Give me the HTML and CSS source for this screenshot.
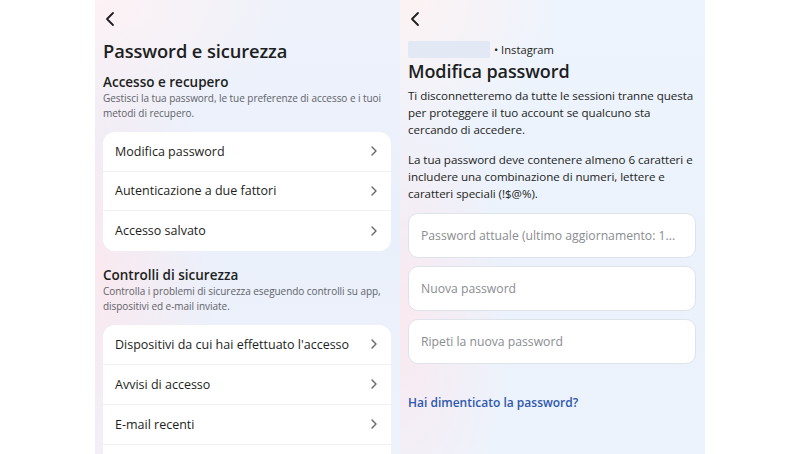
FILE: index.html
```html
<!DOCTYPE html>
<html lang="it">
<head>
<meta charset="utf-8">
<link rel="stylesheet" href="styles.css">
</head>
<body>
<div class="stage">
  <section class="panel panel-left">
    <div class="back">
      <svg width="12" height="16" viewBox="0 0 12 16"><path d="M9 2 L3 8 L9 14" fill="none" stroke="#1c1e21" stroke-width="1.8" stroke-linecap="round" stroke-linejoin="round"/></svg>
    </div>
    <h1 class="title">Password e sicurezza</h1>
    <h2 class="sec-title">Accesso e recupero</h2>
    <p class="sec-desc">Gestisci la tua password, le tue preferenze di accesso e i tuoi metodi di recupero.</p>
    <div class="card">
      <div class="row"><span>Modifica password</span><svg class="chev" width="8" height="12" viewBox="0 0 8 12"><path d="M2 2 L6 6 L2 10" fill="none" stroke="#65676b" stroke-width="1.4" stroke-linecap="round" stroke-linejoin="round"/></svg></div>
      <div class="row"><span>Autenticazione a due fattori</span><svg class="chev" width="8" height="12" viewBox="0 0 8 12"><path d="M2 2 L6 6 L2 10" fill="none" stroke="#65676b" stroke-width="1.4" stroke-linecap="round" stroke-linejoin="round"/></svg></div>
      <div class="row"><span>Accesso salvato</span><svg class="chev" width="8" height="12" viewBox="0 0 8 12"><path d="M2 2 L6 6 L2 10" fill="none" stroke="#65676b" stroke-width="1.4" stroke-linecap="round" stroke-linejoin="round"/></svg></div>
    </div>
    <h2 class="sec-title sec2">Controlli di sicurezza</h2>
    <p class="sec-desc">Controlla i problemi di sicurezza eseguendo controlli su app, dispositivi ed e-mail inviate.</p>
    <div class="card card2">
      <div class="row"><span>Dispositivi da cui hai effettuato l'accesso</span><svg class="chev" width="8" height="12" viewBox="0 0 8 12"><path d="M2 2 L6 6 L2 10" fill="none" stroke="#65676b" stroke-width="1.4" stroke-linecap="round" stroke-linejoin="round"/></svg></div>
      <div class="row"><span>Avvisi di accesso</span><svg class="chev" width="8" height="12" viewBox="0 0 8 12"><path d="M2 2 L6 6 L2 10" fill="none" stroke="#65676b" stroke-width="1.4" stroke-linecap="round" stroke-linejoin="round"/></svg></div>
      <div class="row"><span>E-mail recenti</span><svg class="chev" width="8" height="12" viewBox="0 0 8 12"><path d="M2 2 L6 6 L2 10" fill="none" stroke="#65676b" stroke-width="1.4" stroke-linecap="round" stroke-linejoin="round"/></svg></div>
      <div class="row"><span>&nbsp;</span></div>
    </div>
  </section>
  <section class="panel panel-right">
    <div class="back">
      <svg width="12" height="16" viewBox="0 0 12 16"><path d="M9 2 L3 8 L9 14" fill="none" stroke="#1c1e21" stroke-width="1.8" stroke-linecap="round" stroke-linejoin="round"/></svg>
    </div>
    <div class="account"><span class="blur"></span><span class="acc-name">• Instagram</span></div>
    <h1 class="title title-r">Modifica password</h1>
    <p class="para">Ti disconnetteremo da tutte le sessioni tranne questa per proteggere il tuo account se qualcuno sta<br>cercando di accedere.</p>
    <p class="para para2">La tua password deve contenere almeno 6 caratteri e includere una combinazione di numeri, lettere e caratteri speciali (!$@%).</p>
    <div class="fields">
      <div class="field">Password attuale (ultimo aggiornamento: 1...</div>
      <div class="field">Nuova password</div>
      <div class="field">Ripeti la nuova password</div>
    </div>
    <a class="link">Hai dimenticato la password?</a>
  </section>
</div>
</body>
</html>
```
FILE: styles.css
```css
* { box-sizing: border-box; }
html, body { margin: 0; padding: 0; background: #ffffff; }
body {
  width: 800px;
  height: 454px;
  overflow: hidden;
  font-family: "Open Sans", "Noto Sans", sans-serif;
  color: #1c1e21;
}
.stage {
  display: flex;
  justify-content: center;
  height: 454px;
}
.panel {
  width: 305px;
  height: 454px;
  overflow: hidden;
  padding: 0 9px 0 8px;
}
.panel-left {
  background:
    radial-gradient(ellipse 120px 260px at 0% 60%, rgba(252, 232, 238, 0.9), rgba(252, 232, 238, 0) 100%),
    radial-gradient(ellipse 200px 130px at 0% 0%, rgba(253, 242, 244, 1), rgba(253, 242, 244, 0) 100%),
    linear-gradient(180deg, #eef2fb 0%, #eaf0fb 50%, #eef2fb 100%);
}
.panel-right {
  background:
    radial-gradient(ellipse 110px 240px at 0% 70%, rgba(252, 232, 238, 0.9), rgba(252, 232, 238, 0) 100%),
    radial-gradient(ellipse 160px 140px at 0% 0%, rgba(253, 242, 242, 1), rgba(253, 242, 242, 0) 100%),
    linear-gradient(180deg, #eef4fd 0%, #ebf2fc 60%, #edf3fc 100%);
}
.back {
  height: 16px;
  margin-top: 11px;
  padding-left: 1px;
  display: flex;
  align-items: center;
}
.back svg { display: block; }
.title {
  margin: 12px 0 0;
  font-size: 18.3px;
  font-weight: 600;
  line-height: 24px;
  letter-spacing: -0.1px;
}
.sec-title {
  margin: 10px 0 0;
  font-size: 13.5px;
  font-weight: 600;
  line-height: 18px;
}
.sec2 { margin-top: 15px; }
.sec-desc {
  margin: 0;
  font-size: 10px;
  line-height: 15px;
  color: #5f6368;
  letter-spacing: -0.05px;
}
.card {
  margin-top: 11px;
  background: #ffffff;
  border-radius: 12px;
  overflow: hidden;
}
.row {
  height: 39.5px;
  display: flex;
  align-items: center;
  justify-content: space-between;
  padding: 0 13px 0 12px;
  font-size: 12.5px;
  border-bottom: 1px solid #eef0f2;
}
.card2 .row { height: 40px; }
.row:last-child { border-bottom: none; }
.chev { display: block; }
.account {
  margin-top: 13px;
  display: flex;
  align-items: center;
  height: 18px;
}
.blur {
  width: 82px;
  height: 17px;
  background: #e3e9f4;
  border-radius: 2px;
}
.acc-name {
  font-size: 11.2px;
  margin-left: 4px;
  color: #1c1e21;
}
.title-r {
  margin-top: 1px;
  font-size: 18px;
}
.para {
  margin: 4px 0 0;
  font-size: 11.6px;
  line-height: 17px;
  letter-spacing: -0.05px;
}
.para2 { margin-top: 13px; }
.fields {
  margin-top: 11px;
  display: flex;
  flex-direction: column;
  gap: 8px;
}
.field {
  height: 45px;
  background: #ffffff;
  border: 1px solid #dfe3ea;
  border-radius: 10px;
  display: flex;
  align-items: center;
  padding: 0 12px;
  font-size: 12.2px;
  color: #8a8d91;
  white-space: nowrap;
}
.link {
  display: block;
  margin-top: 30px;
  font-size: 12px;
  font-weight: 600;
  color: #2d58ae;
}
```
